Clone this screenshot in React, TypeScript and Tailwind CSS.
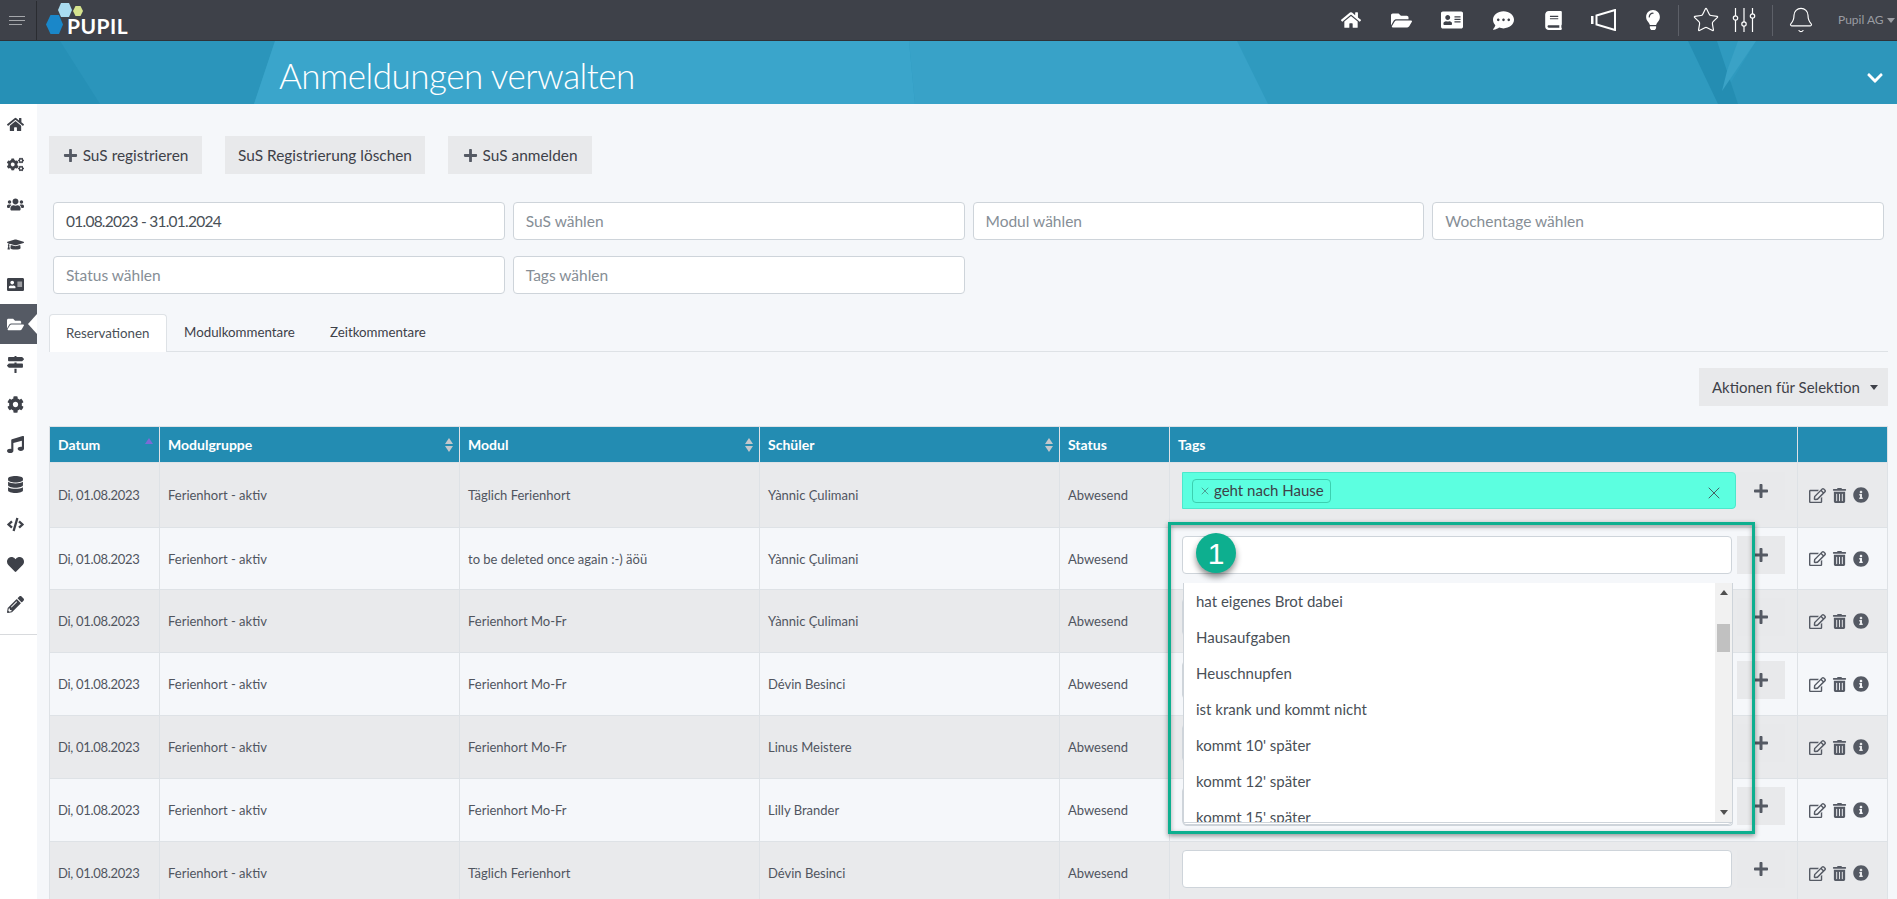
import { Bell, Star, X } from "lucide-react";
import {
  FaAddressCard,
  FaBook,
  FaChevronDown,
  FaCode,
  FaCog,
  FaCogs,
  FaCommentDots,
  FaDatabase,
  FaFolderOpen,
  FaGraduationCap,
  FaHeart,
  FaHome,
  FaInfoCircle,
  FaLightbulb,
  FaMapSigns,
  FaMusic,
  FaPencilAlt,
  FaPlus,
  FaRegEdit,
  FaTrashAlt,
  FaUsers,
} from "react-icons/fa";

const sideIcons = [FaHome, FaCogs, FaUsers, FaGraduationCap, FaAddressCard, FaFolderOpen, FaMapSigns, FaCog, FaMusic, FaDatabase, FaCode, FaHeart, FaPencilAlt];

const rows = [
  ["Täglich Ferienhort", "Yànnic Çulimani"],
  ["to be deleted once again :-) äöü", "Yànnic Çulimani"],
  ["Ferienhort Mo-Fr", "Yànnic Çulimani"],
  ["Ferienhort Mo-Fr", "Dévin Besinci"],
  ["Ferienhort Mo-Fr", "Linus Meistere"],
  ["Ferienhort Mo-Fr", "Lilly Brander"],
  ["Täglich Ferienhort", "Dévin Besinci"],
];

const options = ["hat eigenes Brot dabei", "Hausaufgaben", "Heuschnupfen", "ist krank und kommt nicht", "kommt 10' später", "kommt 12' später", "kommt 15' später"];

function Logo() {
  return (
    <div className="relative h-[41px] w-[90px]">
      <svg className="absolute left-0 top-0" width="45" height="36" viewBox="0 0 45 36">
        <polygon points="1,24.5 5.5,15 14,15 18,24.5 14,34 5.5,34" fill="#1a87c9" />
        <polygon points="13,10 16,3 24,3 27,10 24,17 16,17" fill="#aadcf0" />
        <polygon points="28,11 30.5,6 35.5,6 38,11 35.5,16 30.5,16" fill="#d6e38e" />
      </svg>
      <span className="absolute left-[22px] top-[14px] text-[21px] font-bold leading-[24px] tracking-[0.5px] text-white">PUPIL</span>
    </div>
  );
}

function Megaphone() {
  return (
    <svg width="25" height="22" viewBox="0 0 25 22" fill="none" stroke="white" strokeWidth="2">
      <rect x="0" y="7" width="2.5" height="8" fill="white" stroke="none" />
      <path d="M5.5 6.5 24 1v20L5.5 15.5Z" />
    </svg>
  );
}

function Sliders() {
  return (
    <svg width="26" height="26" viewBox="0 0 26 26" fill="none" stroke="white" strokeWidth="1.2">
      <path d="M4.5 1v8M4.5 13v12M13 1v14M13 19v6M21.5 1v6M21.5 11v14" />
      <circle cx="4.5" cy="11" r="2.2" />
      <circle cx="13" cy="17" r="2.2" />
      <circle cx="21.5" cy="9" r="2.2" />
    </svg>
  );
}

function TopBar() {
  return (
    <header className="flex h-[41px] shrink-0 items-center border-b border-[#2f3238] bg-[#3e4149]">
      <div className="flex h-[39px] w-[37px] shrink-0 flex-col gap-[3px] border-r border-[#2a2c31] pl-[9px] pt-[15px]">
        <span className="h-px w-4 bg-[#a5a7ab]" />
        <span className="h-px w-4 bg-[#a5a7ab]" />
        <span className="h-px w-[13px] bg-[#a5a7ab]" />
      </div>
      <div className="ml-[8px]">
        <Logo />
      </div>
      <div className="ml-auto flex items-center text-white">
        <span className="flex w-[50px] justify-center"><FaHome size={20} /></span>
        <span className="flex w-[50px] justify-center"><FaFolderOpen size={21} /></span>
        <span className="flex w-[52px] justify-center"><FaAddressCard size={22} /></span>
        <span className="flex w-[50px] justify-center"><FaCommentDots size={21} /></span>
        <span className="flex w-[50px] justify-center"><FaBook size={19} /></span>
        <span className="flex w-[50px] justify-center"><Megaphone /></span>
        <span className="flex w-[50px] justify-center"><FaLightbulb size={20} /></span>
        <span className="h-[31px] w-px bg-[#5d6068]" />
        <span className="ml-[2px] flex w-[50px] justify-center"><Star size={28} strokeWidth={1} /></span>
        <span className="flex w-[26px] justify-center"><Sliders /></span>
        <span className="ml-[15px] h-[31px] w-px bg-[#5d6068]" />
        <span className="flex w-[55px] justify-center"><Bell size={28} strokeWidth={1} /></span>
        <span className="flex w-[69px] items-center whitespace-nowrap pl-[10px] text-[12px] text-[#9a9ca2]">
          Pupil AG
          <span className="ml-[3px] h-0 w-0 border-x-[4px] border-t-[5px] border-x-transparent border-t-[#9a9ca2]" />
        </span>
      </div>
    </header>
  );
}

function TitleBand() {
  return (
    <div className="relative h-[63px] shrink-0 overflow-hidden bg-[#2f9abf]">
      <svg className="absolute inset-0" width="1897" height="63" viewBox="0 0 1897 63">
        <polygon points="0,0 275,0 254,63 0,63" fill="#2b95bb" />
        <polygon points="0,0 60,0 100,63 0,63" fill="#2690b6" />
        <polygon points="275,0 909,0 915,63 254,63" fill="#3aa5cb" />
        <polygon points="909,0 1237,0 1268,63 915,63" fill="#38a2c8" />
        <polygon points="1756,0 1897,0 1897,63 1718,63" fill="#2d96bb" />
        <polygon points="1688,0 1717,0 1738,63 1718,63" fill="#248db2" />
        <polygon points="1738,0 1756,0 1722,50 1727,30" fill="#3aa2c6" />
      </svg>
      <h1 className="absolute left-[279px] top-[11px] text-[35px] font-light leading-[46px] tracking-[-0.5px] text-white">Anmeldungen verwalten</h1>
      <FaChevronDown className="absolute left-[1866px] top-[28px] text-white" size={18} />
    </div>
  );
}

function Sidebar() {
  return (
    <aside className="w-[37px] shrink-0 bg-white">
      <div className="border-b border-[#d8dadd] pb-[10px]">
        {sideIcons.map((Icon, i) => (
          <div key={i} className={i === 5 ? "relative flex h-10 items-center bg-[#555a64] pl-[7px] text-white" : "flex h-10 items-center pl-[7px] text-[#3e4149]"}>
            <Icon size={17} />
            {i === 5 ? <span className="absolute right-0 top-[10px] h-0 w-0 border-y-[10px] border-r-[9px] border-y-transparent border-r-white" /> : null}
          </div>
        ))}
      </div>
    </aside>
  );
}

function SortIcon({ active }: { active?: boolean }) {
  return (
    <span className="absolute right-[6px] top-[11px] flex flex-col gap-[2px]">
      <span className={active ? "h-0 w-0 border-x-[4px] border-b-[6px] border-x-transparent border-b-[#7b6bd6]" : "h-0 w-0 border-x-[4px] border-b-[6px] border-x-transparent border-b-[#c3c7cb]"} />
      {active ? null : <span className="h-0 w-0 border-x-[4px] border-t-[6px] border-x-transparent border-t-[#c3c7cb]" />}
    </span>
  );
}

function Dropdown() {
  return (
    <div className="absolute left-0 top-[46px] z-10 h-[243px] w-[550px] rounded-b border-x border-b border-[#ced4da]">
      <div className="flex h-[240px] overflow-hidden border-b border-[#ced4da] bg-white">
        <div className="min-w-0 flex-1 overflow-hidden">
          {options.map((o) => (
            <div key={o} className="flex h-9 items-center pl-3 text-[15px] text-[#495057]">{o}</div>
          ))}
        </div>
        <div className="relative w-[17px] shrink-0 bg-[#f1f1f1]">
          <span className="absolute left-[5px] top-[7px] h-0 w-0 border-x-[4px] border-b-[5px] border-x-transparent border-b-[#505050]" />
          <span className="absolute left-[2px] top-[41px] h-[28px] w-[13px] bg-[#c1c1c1]" />
          <span className="absolute bottom-[7px] left-[5px] h-0 w-0 border-x-[4px] border-t-[5px] border-x-transparent border-t-[#505050]" />
        </div>
      </div>
    </div>
  );
}

function Annotation() {
  return (
    <>
      <div className="pointer-events-none absolute -left-[15px] -top-[15px] z-20 h-[312px] w-[587px] border-[3px] border-[#0daf8f] shadow-[0_2px_5px_rgba(0,0,0,0.4),inset_0_2px_5px_rgba(0,0,0,0.3)]" />
      <div className="absolute -top-[4px] left-[13px] z-20 flex h-10 w-10 items-center justify-center rounded-full bg-[#0daf8f] font-['Liberation_Sans',sans-serif] text-[30px] text-white shadow-[0_4px_6px_rgba(0,0,0,0.45)]">1</div>
    </>
  );
}

function Table() {
  const th = "relative border border-[#dee2e6] px-2 text-left text-[14px] font-bold text-white";
  const td = "border border-[#dee2e6] px-2 pt-[2px] text-[13px] text-[#50555f]";
  return (
    <table className="mt-5 w-[1838px] table-fixed border-collapse">
      <colgroup>
        <col className="w-[110px]" />
        <col className="w-[300px]" />
        <col className="w-[300px]" />
        <col className="w-[300px]" />
        <col className="w-[110px]" />
        <col className="w-[628px]" />
        <col className="w-[90px]" />
      </colgroup>
      <thead>
        <tr className="h-[36px] bg-[#238cb2]">
          <th className={th}>Datum<SortIcon active /></th>
          <th className={th}>Modulgruppe<SortIcon /></th>
          <th className={th}>Modul<SortIcon /></th>
          <th className={th}>Schüler<SortIcon /></th>
          <th className={th}>Status</th>
          <th className={th}>Tags</th>
          <th className={th} />
        </tr>
      </thead>
      <tbody>
        {rows.map((r, i) => (
          <tr key={i} className={`${i === 0 ? "h-[65px]" : i === 1 ? "h-[62px]" : "h-[63px]"} ${i % 2 === 0 ? "bg-[#e9eaec]" : "bg-[#f5f7fa]"}`}>
            <td className={`${td} tracking-[-0.3px]`}>Di, 01.08.2023</td>
            <td className={td}>Ferienhort - aktiv</td>
            <td className={td}>{r[0]}</td>
            <td className={td}>{r[1]}</td>
            <td className={td}>Abwesend</td>
            <td className={`border border-[#dee2e6] pl-3 pr-3 align-top ${i === 0 ? "pt-[9px]" : "pt-2"}`}>
              {i === 0 ? (
                <div className="flex">
                  <div className="flex h-[37px] w-[555px] items-center justify-between rounded-r border border-[#4ce8cc] bg-[#5cffe0] pl-[9px] pr-[11px]">
                    <span className="flex h-6 items-center gap-[3px] rounded border border-[#3cd0b0] px-[6px] text-[15px] text-[#3e4149]">
                      <X size={12} strokeWidth={1} />
                      geht nach Hause
                    </span>
                    <X className="mt-[5px] text-[#3e4149]" size={20} strokeWidth={1} />
                  </div>
                  <div className="flex h-[38px] w-[49px] items-center justify-center bg-[#e8e9eb] text-[#555a64]"><FaPlus size={16} /></div>
                </div>
              ) : (
                <div className="flex gap-[5px]">
                  <div className="relative h-[38px] w-[550px] rounded border border-[#ced4da] bg-white">
                    {i === 1 ? <Dropdown /> : null}
                    {i === 1 ? <Annotation /> : null}
                  </div>
                  <div className="flex h-[38px] w-[48px] items-center justify-center bg-[#e8e9eb] text-[#555a64]"><FaPlus size={16} /></div>
                </div>
              )}
            </td>
            <td className="border border-[#dee2e6] pl-[11px] text-[#555a64]">
              <div className="flex items-center gap-[6px]">
                <FaRegEdit size={17} />
                <FaTrashAlt size={15} />
                <FaInfoCircle size={16} />
              </div>
            </td>
          </tr>
        ))}
      </tbody>
    </table>
  );
}

export default function App() {
  const filters = ["01.08.2023 - 31.01.2024", "SuS wählen", "Modul wählen", "Wochentage wählen", "Status wählen", "Tags wählen"];
  return (
    <div className="flex h-screen flex-col overflow-hidden bg-[#f5f7fa] font-['Lato',sans-serif]">
      <TopBar />
      <TitleBand />
      <div className="flex min-h-0 flex-1">
        <Sidebar />
        <main className="min-w-0 flex-1 pl-3 pt-8">
          <div className="flex gap-[23px] text-[15.4px] text-[#3e4149]">
            <button className="flex h-[38px] w-[153px] items-center justify-center gap-[5px] bg-[#e8e9eb] pt-px"><FaPlus className="text-[#555a64]" size={15} />SuS registrieren</button>
            <button className="h-[38px] w-[200px] bg-[#e8e9eb] pt-px">SuS Registrierung löschen</button>
            <button className="flex h-[38px] w-[144px] items-center justify-center gap-[5px] bg-[#e8e9eb] pt-px"><FaPlus className="text-[#555a64]" size={15} />SuS anmelden</button>
          </div>

          <div className="ml-1 mt-7 grid w-[1831px] grid-cols-4 gap-x-2 gap-y-4">
            {filters.map((f, i) => (
              <div key={f} className={`flex h-[38px] items-center rounded border border-[#ced4da] bg-white pl-3 pt-px text-[15.5px] ${i === 0 ? "tracking-[-0.75px] text-[#495057]" : "text-[#868e96]"}`}>{f}</div>
            ))}
          </div>

          <div className="mt-5 flex h-[38px] w-[1839px] border-b border-[#dee2e6] text-[13.3px]">
            <div className="flex h-[38px] w-[118px] items-center rounded-t border border-b-0 border-[#dee2e6] bg-white pl-4 pt-px text-[#495057]">Reservationen</div>
            <div className="flex w-[146px] items-center pl-[17px] pt-px text-[#3e4149]">Modulkommentare</div>
            <div className="flex items-center pl-[17px] pt-px text-[#3e4149]">Zeitkommentare</div>
          </div>

          <div className="mt-4 flex w-[1839px] justify-end">
            <button className="flex h-[38px] w-[189px] items-center gap-[10px] bg-[#e8e9eb] pl-[13px] text-[15px] text-[#3e4149]">
              Aktionen für Selektion
              <span className="h-0 w-0 border-x-[4px] border-t-[5px] border-x-transparent border-t-[#3e4149]" />
            </button>
          </div>

          <Table />
        </main>
      </div>
    </div>
  );
}
